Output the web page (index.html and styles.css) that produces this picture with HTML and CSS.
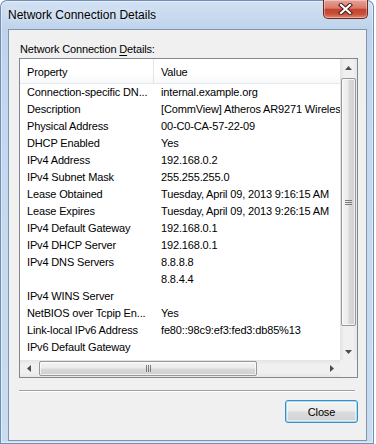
FILE: index.html
```html
<!DOCTYPE html>
<html>
<head>
<meta charset="utf-8">
<link rel="stylesheet" href="styles.css">
</head>
<body>
<div class="window">
  <div class="titlebar">
    <span class="title">Network Connection Details</span>
    <div class="close-btn">
      <svg width="15" height="12" viewBox="0 0 15 12">
        <path d="M3 2 L12 10 M12 2 L3 10" stroke="#4a1c16" stroke-width="4.2" stroke-linecap="square" fill="none"/>
        <path d="M3 2 L12 10 M12 2 L3 10" stroke="#ffffff" stroke-width="2.2" stroke-linecap="square" fill="none"/>
      </svg>
    </div>
  </div>
  <div class="client">
    <div class="label">Network Connection <u>D</u>etails:</div>
    <div class="list">
      <div class="view">
        <div class="header">
          <div class="hcell hcell-prop">Property</div>
          <div class="hcell">Value</div>
        </div>
        <div class="rows">
          <div class="row"><span class="prop">Connection-specific DN...</span><span class="val">internal.example.org</span></div>
          <div class="row"><span class="prop">Description</span><span class="val">[CommView] Atheros AR9271 Wireless Network Adapter</span></div>
          <div class="row"><span class="prop">Physical Address</span><span class="val">00-C0-CA-57-22-09</span></div>
          <div class="row"><span class="prop">DHCP Enabled</span><span class="val">Yes</span></div>
          <div class="row"><span class="prop">IPv4 Address</span><span class="val">192.168.0.2</span></div>
          <div class="row"><span class="prop">IPv4 Subnet Mask</span><span class="val">255.255.255.0</span></div>
          <div class="row"><span class="prop">Lease Obtained</span><span class="val">Tuesday, April 09, 2013 9:16:15 AM</span></div>
          <div class="row"><span class="prop">Lease Expires</span><span class="val">Tuesday, April 09, 2013 9:26:15 AM</span></div>
          <div class="row"><span class="prop">IPv4 Default Gateway</span><span class="val">192.168.0.1</span></div>
          <div class="row"><span class="prop">IPv4 DHCP Server</span><span class="val">192.168.0.1</span></div>
          <div class="row"><span class="prop">IPv4 DNS Servers</span><span class="val">8.8.8.8</span></div>
          <div class="row"><span class="prop"></span><span class="val">8.8.4.4</span></div>
          <div class="row"><span class="prop">IPv4 WINS Server</span><span class="val"></span></div>
          <div class="row"><span class="prop">NetBIOS over Tcpip En...</span><span class="val">Yes</span></div>
          <div class="row"><span class="prop">Link-local IPv6 Address</span><span class="val">fe80::98c9:ef3:fed3:db85%13</span></div>
          <div class="row"><span class="prop">IPv6 Default Gateway</span><span class="val"></span></div>
          <div class="row"><span class="prop">IPv6 DNS Servers</span><span class="val"></span></div>
        </div>
      </div>
      <div class="vscroll">
        <div class="sbtn">
          <svg width="7" height="4" viewBox="0 0 7 4"><path d="M0 4 L3.5 0 L7 4 Z" fill="#4d4d4d"/></svg>
        </div>
        <div class="vthumb">
          <svg width="7" height="5" viewBox="0 0 7 5"><path d="M0 0.5 H7 M0 2.5 H7 M0 4.5 H7" stroke="#7a7a7a" stroke-width="1"/></svg>
        </div>
        <div class="spacer"></div>
        <div class="sbtn">
          <svg width="7" height="4" viewBox="0 0 7 4"><path d="M0 0 L7 0 L3.5 4 Z" fill="#4d4d4d"/></svg>
        </div>
      </div>
      <div class="hscroll">
        <div class="sbtn">
          <svg width="4" height="7" viewBox="0 0 4 7"><path d="M4 0 L4 7 L0 3.5 Z" fill="#4d4d4d"/></svg>
        </div>
        <div class="hthumb">
          <svg width="5" height="7" viewBox="0 0 5 7"><path d="M0.5 0 V7 M2.5 0 V7 M4.5 0 V7" stroke="#7a7a7a" stroke-width="1"/></svg>
        </div>
        <div class="spacer"></div>
        <div class="sbtn">
          <svg width="4" height="7" viewBox="0 0 4 7"><path d="M0 0 L0 7 L4 3.5 Z" fill="#4d4d4d"/></svg>
        </div>
      </div>
      <div class="corner"></div>
    </div>
    <div class="separator"></div>
    <div class="actions">
      <button class="btn">Close</button>
    </div>
  </div>
</div>
</body>
</html>
```
FILE: styles.css
```css
* { box-sizing: border-box; }

html, body {
  margin: 0;
  padding: 0;
  background: #ffffff;
}

body {
  font-family: "Liberation Sans", Arial, sans-serif;
  color: #000;
}

.window {
  width: 374px;
  height: 444px;
  padding: 0 7px 3px 8px;
  display: flex;
  flex-direction: column;
  border-radius: 7px 7px 0 0;
  background: linear-gradient(to bottom, #d3e2f3 0px, #bfd4ec 28px, #c3d7ee 120px, #c9dcf1 100%);
  box-shadow: inset 0 0 0 1px #6f8fb6, inset 0 0 0 2px rgba(255, 255, 255, 0.45);
}

.titlebar {
  height: 29px;
  display: flex;
  align-items: flex-start;
}

.title {
  padding-top: 8px;
  font-size: 12px;
  line-height: 14px;
  color: #000;
  text-shadow: 0 0 6px rgba(255, 255, 255, 0.9);
}

.close-btn {
  margin-left: auto;
  margin-right: -1px;
  width: 45px;
  height: 19px;
  display: flex;
  align-items: center;
  justify-content: center;
  border: 1px solid #6e2a22;
  border-top: none;
  border-radius: 0 0 5px 5px;
  background: linear-gradient(to bottom, #e7a196 0%, #d97a6c 45%, #c5432f 52%, #c8503c 78%, #e08a72 100%);
  box-shadow: inset 0 0 0 1px rgba(255, 255, 255, 0.35);
}

.client {
  flex: 1;
  display: flex;
  flex-direction: column;
  background: #f0f0f0;
  border: 1px solid #8395ab;
  padding: 12px 8px 0 10px;
}

.label {
  font-size: 11px;
  letter-spacing: -0.15px;
  line-height: 15px;
  padding-left: 1px;
}

.label u {
  text-decoration: underline;
  text-underline-offset: 2px;
}

.list {
  margin-top: 1px;
  height: 320px;
  border: 1px solid #828790;
  background: #ffffff;
  display: grid;
  grid-template-columns: 1fr 17px;
  grid-template-rows: 1fr 17px;
}

.view {
  overflow: hidden;
  font-size: 11px;
  letter-spacing: -0.15px;
}

.header {
  height: 25px;
  display: grid;
  grid-template-columns: 134px 1fr;
  border-bottom: 1px solid #e3e6eb;
  background: linear-gradient(to bottom, #ffffff 0%, #ffffff 60%, #f7f8fa 100%);
}

.hcell {
  padding: 3px 0 0 7px;
  line-height: 21px;
  white-space: nowrap;
}

.hcell-prop {
  border-right: 1px solid #e5e5e5;
}

.row {
  height: 17px;
  line-height: 17px;
  display: grid;
  grid-template-columns: 134px 1fr;
  white-space: nowrap;
}

.prop, .val {
  padding-left: 7px;
  overflow: hidden;
}

.val {
  overflow: visible;
}

.vscroll {
  display: flex;
  flex-direction: column;
  background: linear-gradient(to right, #e3e3e3 0%, #f0f0f0 25%, #f0f0f0 75%, #e6e6e6 100%);
}

.hscroll {
  display: flex;
  flex-direction: row;
  background: linear-gradient(to bottom, #e3e3e3 0%, #f0f0f0 25%, #f0f0f0 75%, #e6e6e6 100%);
}

.sbtn {
  width: 17px;
  height: 17px;
  flex: none;
  display: flex;
  align-items: center;
  justify-content: center;
}

.spacer {
  flex: 1;
}

.vthumb {
  flex: none;
  height: 248px;
  margin: 2px 1px 0 1px;
  border: 1px solid #979797;
  border-radius: 2px;
  background: linear-gradient(to right, #f4f4f4 0%, #ebebeb 45%, #d9d9d9 55%, #cfcfcf 100%);
  box-shadow: inset 0 0 0 1px rgba(255, 255, 255, 0.7);
  display: flex;
  align-items: center;
  justify-content: center;
}

.hthumb {
  flex: none;
  width: 218px;
  margin: 1px 0 1px 2px;
  border: 1px solid #979797;
  border-radius: 2px;
  background: linear-gradient(to bottom, #f4f4f4 0%, #ebebeb 45%, #d9d9d9 55%, #cfcfcf 100%);
  box-shadow: inset 0 0 0 1px rgba(255, 255, 255, 0.7);
  display: flex;
  align-items: center;
  justify-content: center;
}

.corner {
  background: #f0f0f0;
}

.separator {
  margin-top: 12px;
  margin-right: 3px;
  height: 2px;
  border-top: 1px solid #a0a0a0;
  border-bottom: 1px solid #ffffff;
}

.actions {
  margin-top: 8px;
  display: flex;
  justify-content: flex-end;
}

.btn {
  width: 73px;
  height: 23px;
  padding: 0;
  font-family: "Liberation Sans", Arial, sans-serif;
  font-size: 11px;
  letter-spacing: -0.15px;
  color: #000;
  border: 1px solid #3c8ec2;
  border-radius: 3px;
  background: linear-gradient(to bottom, #f4f4f4 0%, #ececec 48%, #dcdcdc 52%, #d2d2d2 100%);
  box-shadow: inset 0 0 0 1px #a6dcf2, inset 0 0 0 2px rgba(255, 255, 255, 0.5);
}
```
